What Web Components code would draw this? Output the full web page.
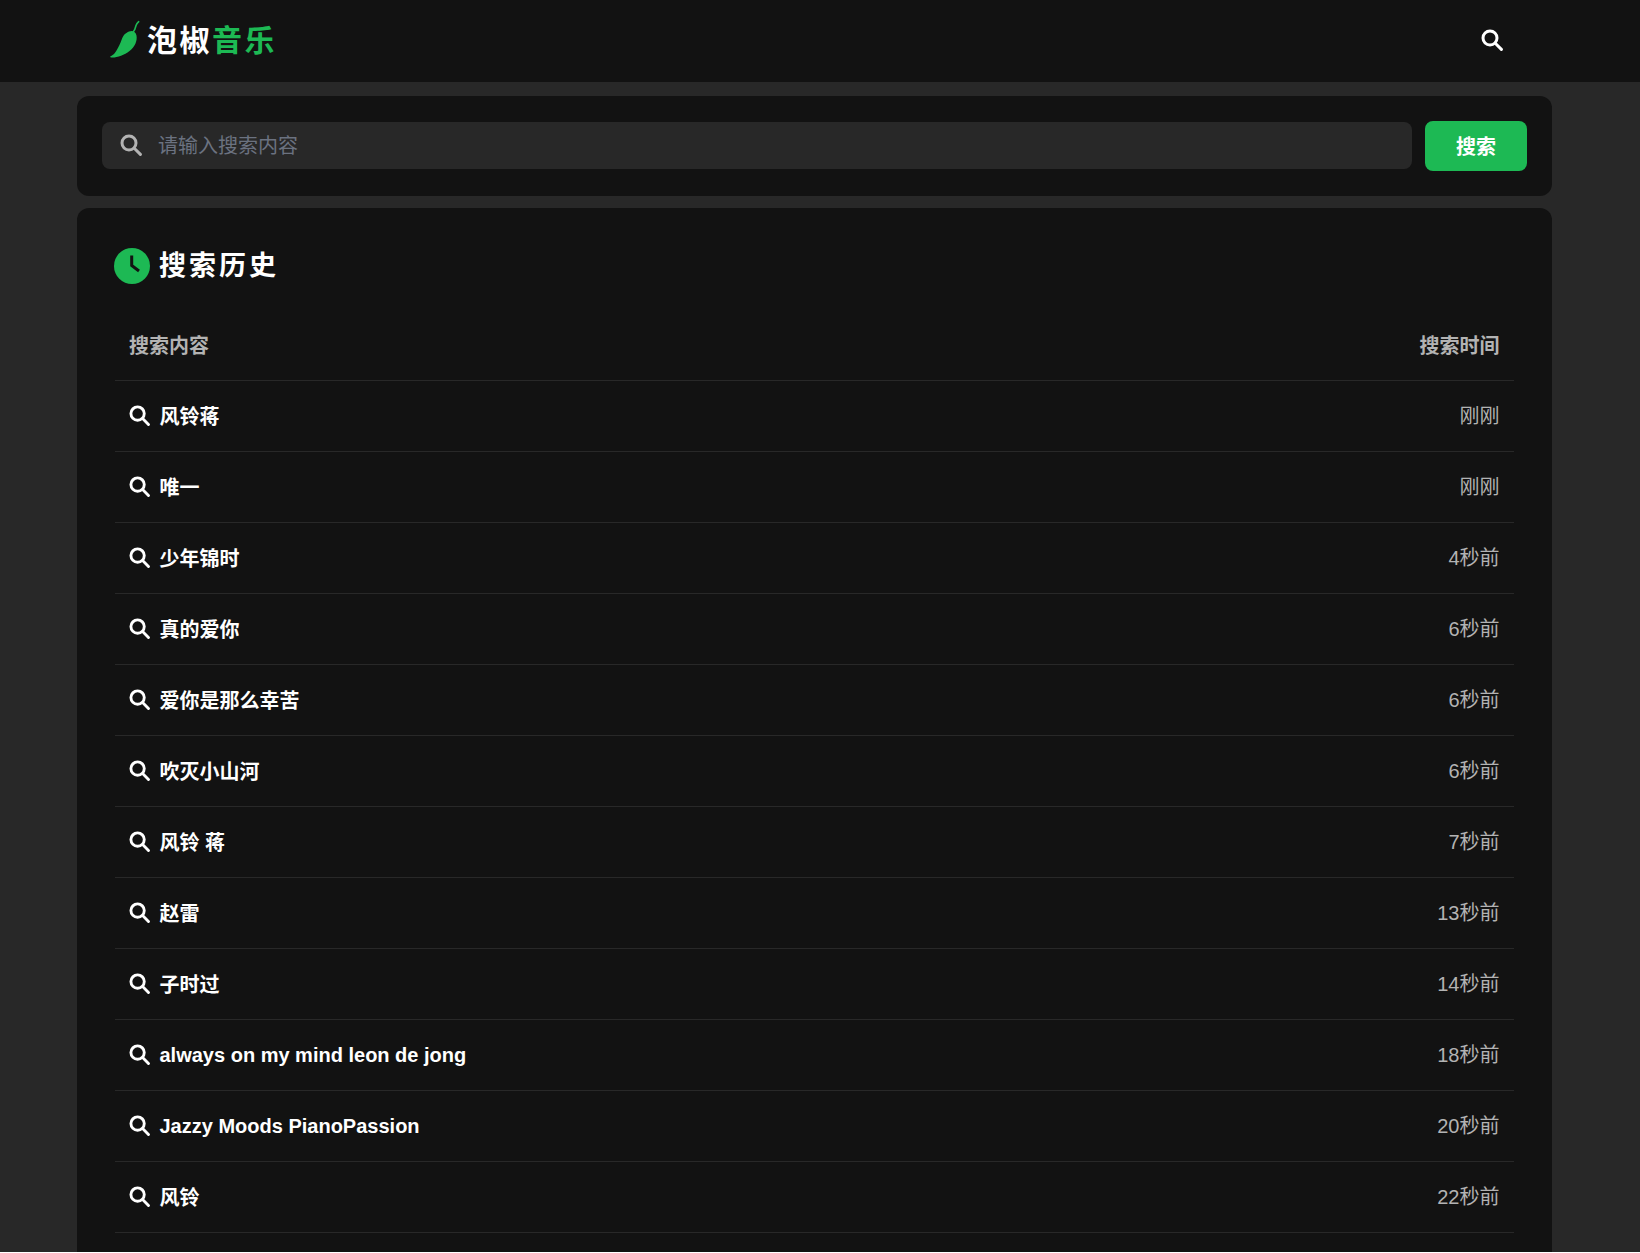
<!DOCTYPE html>
<html lang="zh">
<head>
<meta charset="utf-8">
<title>搜索历史</title>
<style>
  html { margin: 0; height: 100%; background: #fff; overflow: hidden; }
  body {
    margin: 0;
    height: 1252px;
    overflow: hidden;
    background: #282828;
    color: #fff;
    font-family: "Liberation Sans", "Noto Sans CJK SC", sans-serif;
  }
</style>
</head>
<body>
<site-header></site-header>
<main-column>
  <search-box></search-box>
  <history-card>
    <history-row keyword="风铃蒋" time="刚刚"></history-row>
    <history-row keyword="唯一" time="刚刚"></history-row>
    <history-row keyword="少年锦时" time="4秒前"></history-row>
    <history-row keyword="真的爱你" time="6秒前"></history-row>
    <history-row keyword="爱你是那么幸苦" time="6秒前"></history-row>
    <history-row keyword="吹灭小山河" time="6秒前"></history-row>
    <history-row keyword="风铃 蒋" time="7秒前"></history-row>
    <history-row keyword="赵雷" time="13秒前"></history-row>
    <history-row keyword="子时过" time="14秒前"></history-row>
    <history-row keyword="always on my mind leon de jong" time="18秒前"></history-row>
    <history-row keyword="Jazzy Moods PianoPassion" time="20秒前"></history-row>
    <history-row keyword="风铃" time="22秒前"></history-row>
  </history-card>
</main-column>

<script>
const searchIcon = (size, color) => `
  <svg width="${size}" height="${size}" viewBox="0 0 22 22" fill="none" stroke="${color}" stroke-width="3" stroke-linecap="round">
    <circle cx="9" cy="9" r="7"></circle>
    <path d="M14.500 14.500 L20.400 20.400"></path>
  </svg>`;

class SiteHeader extends HTMLElement {
  connectedCallback() {
    this.attachShadow({ mode: 'open' });
    this.shadowRoot.innerHTML = `
      <style>
        :host {
          display: flex;
          align-items: center;
          justify-content: space-between;
          height: 82px;
          box-sizing: border-box;
          padding: 0 137px 0 109px;
          background: #121212;
        }
        .logo { display: flex; align-items: center; gap: 7px; }
        .name {
          padding-bottom: 1px;
          font-size: 30px;
          font-weight: 700;
          letter-spacing: 2.500px;
          line-height: 40px;
        }
        .name span { color: #1db954; }
        svg { display: block; }
        .find { margin-bottom: 3px; }
      </style>
      <div class="logo">
        <svg width="31" height="42" viewBox="9 5 31 42">
          <path fill="#1db954" d="M10 41.700C13.500 40 15 38 16.500 35.500C18.500 32 20 29 21.700 24.500C22.800 21.500 24 19.500 26 18.200C28 16.800 30 16 31.800 16C34 16.200 35.800 17.500 36.500 20.500C37 23.500 36.500 26 35.500 28.500C34 31.500 32 34 29.500 36C27 38 24 39.500 21 40.700C18 41.800 15 42.400 12.500 42.500C10.800 42.500 9.800 42.200 10 41.700Z"></path>
          <path fill="none" stroke="#1db954" stroke-width="1.600" stroke-linecap="round" d="M33.500 16.500C35 15 35.500 12.500 36 10.500C36.500 9 37.500 7.800 38.700 6.700"></path>
        </svg>
        <div class="name">泡椒<span>音乐</span></div>
      </div>
      <div class="find">${searchIcon(22, '#ffffff')}</div>
    `;
  }
}

class MainColumn extends HTMLElement {
  connectedCallback() {
    this.attachShadow({ mode: 'open' });
    this.shadowRoot.innerHTML = `
      <style>
        :host {
          display: flex;
          flex-direction: column;
          gap: 12px;
          width: 1475px;
          margin: 14px 0 0 77px;
        }
      </style>
      <slot></slot>
    `;
  }
}

class SearchBox extends HTMLElement {
  connectedCallback() {
    this.attachShadow({ mode: 'open' });
    this.shadowRoot.innerHTML = `
      <style>
        :host {
          display: flex;
          align-items: center;
          gap: 13px;
          height: 100px;
          box-sizing: border-box;
          padding: 0 25px;
          background: #121212;
          border-radius: 12px;
        }
        .field {
          flex: 1;
          display: flex;
          align-items: center;
          gap: 16px;
          height: 47px;
          margin-bottom: 2px;
          box-sizing: border-box;
          padding: 0 17px 0 18px;
          background: #282828;
          border-radius: 8px;
        }
        .field svg { flex: none; }
        input {
          flex: 1;
          min-width: 0;
          border: 0;
          outline: 0;
          padding: 2px 0 0;
          background: transparent;
          color: #fff;
          font: 20px "Liberation Sans", "Noto Sans CJK SC", sans-serif;
        }
        input::placeholder { color: #6b7280; opacity: 1; }
        button {
          width: 102px;
          height: 50px;
          border: 0;
          padding: 0 0 2px;
          border-radius: 8px;
          background: #1db954;
          color: #fff;
          font: 700 20px "Liberation Sans", "Noto Sans CJK SC", sans-serif;
        }
      </style>
      <div class="field">
        ${searchIcon(22, '#b3b3b3')}
        <input placeholder="请输入搜索内容">
      </div>
      <button>搜索</button>
    `;
  }
}

class HistoryCard extends HTMLElement {
  connectedCallback() {
    this.attachShadow({ mode: 'open' });
    this.shadowRoot.innerHTML = `
      <style>
        :host {
          display: block;
          box-sizing: border-box;
          padding: 40px 38px 40px;
          background: #121212;
          border-radius: 12px 12px 0 0;
        }
        h2 {
          display: flex;
          align-items: center;
          gap: 10px;
          height: 36px;
          margin: 0 0 25px;
          font-size: 27px;
          line-height: 36px;
          letter-spacing: 3px;
          font-weight: 700;
        }
        h2 svg { margin-left: -1px; }
        h2 span { margin-left: -1px; }
        .head {
          display: flex;
          justify-content: space-between;
          align-items: center;
          height: 72px;
          box-sizing: border-box;
          padding: 0 14.500px 0 14px;
          border-bottom: 1px solid #282828;
          color: #b3b3b3;
          font-size: 20px;
          font-weight: 700;
        }
      </style>
      <h2>
        <svg width="36" height="36" viewBox="0 0 36 36">
          <circle cx="18" cy="18" r="18" fill="#1db954"></circle>
          <path d="M17.700 7.500 V17.500 L25 23" fill="none" stroke="#121212" stroke-width="3"></path>
        </svg>
        <span>搜索历史</span>
      </h2>
      <div class="head"><span>搜索内容</span><span>搜索时间</span></div>
      <slot></slot>
    `;
  }
}

class HistoryRow extends HTMLElement {
  connectedCallback() {
    this.attachShadow({ mode: 'open' });
    const keyword = this.getAttribute('keyword');
    // CJK glyphs sit a pixel low in the line box, latin ones do not
    const cjk = /[^\x00-\x7f]/.test(keyword) ? 'cjk' : '';
    this.shadowRoot.innerHTML = `
      <style>
        :host {
          display: flex;
          justify-content: space-between;
          align-items: center;
          height: 71px;
          box-sizing: border-box;
          padding: 0 14.500px 0 14px;
          border-bottom: 1px solid #282828;
        }
        .kw {
          display: flex;
          align-items: center;
          gap: 9.500px;
          font-size: 20px;
          font-weight: 700;
        }
        .kw svg { margin-bottom: 2px; }
        .cjk { padding-bottom: 2px; }
        .time { padding-bottom: 3px; color: #b3b3b3; font-size: 20px; }
      </style>
      <div class="kw">${searchIcon(21, '#ffffff')}<span class="${cjk}">${keyword}</span></div>
      <div class="time">${this.getAttribute('time')}</div>
    `;
  }
}

customElements.define('site-header', SiteHeader);
customElements.define('main-column', MainColumn);
customElements.define('search-box', SearchBox);
customElements.define('history-card', HistoryCard);
customElements.define('history-row', HistoryRow);
</script>
</body>
</html>
